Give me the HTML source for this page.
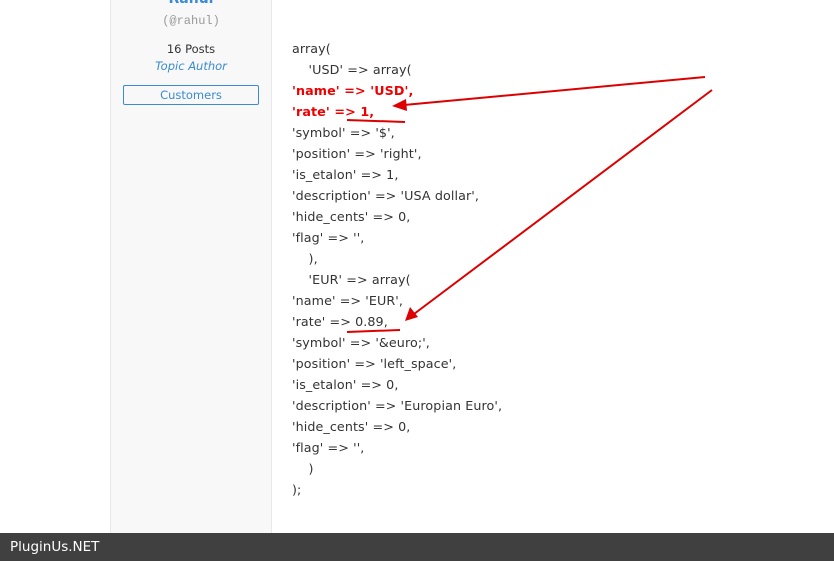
<!DOCTYPE html>
<html><head><style>
body{margin:0;width:834px;height:561px;overflow:hidden;background:#fff;position:relative;font-family:"DejaVu Sans",Verdana,sans-serif;}
.side{position:absolute;left:110px;top:0;width:160px;height:533px;background:#f8f8f8;border-left:1px solid #e8e8e8;border-right:1px solid #e8e8e8;text-align:center;}
.name{position:absolute;left:0;right:0;top:-9px;color:#3a8ad4;font-weight:bold;font-size:14px;}
.handle{position:absolute;left:0;right:0;top:14px;color:#999;font-family:"Liberation Mono",monospace;font-size:12px;}
.posts{position:absolute;left:0;right:0;top:42px;font-size:11.5px;color:#333;}
.auth{position:absolute;left:0;right:0;top:59px;font-size:11.5px;color:#3a8ad4;font-style:italic;}
.btn{position:absolute;left:12px;top:85px;width:134px;height:18px;border:1px solid #3a8ad4;border-radius:2px;font-size:11.5px;color:#3a8ad4;line-height:18px;}
.code{position:absolute;left:292px;top:38px;font-size:12.7px;letter-spacing:0.1px;line-height:21px;color:#333;white-space:pre;}
.r{color:#e00;font-weight:bold;}
.foot{position:absolute;left:0;top:533px;width:834px;height:28px;background:#404040;color:#fff;font-size:13.5px;line-height:28px;padding-left:10px;box-sizing:border-box;}
svg{position:absolute;left:0;top:0;}
</style></head><body>
<div class="side">
<div class="name">Rahul</div>
<div class="handle">(@rahul)</div>
<div class="posts">16 Posts</div>
<div class="auth">Topic Author</div>
<div class="btn">Customers</div>
</div>
<div class="code">array(
    'USD' =&gt; array(
<span class="r">'name' =&gt; 'USD',</span>
<span class="r">'rate' =&gt; 1,</span>
'symbol' =&gt; '$',
'position' =&gt; 'right',
'is_etalon' =&gt; 1,
'description' =&gt; 'USA dollar',
'hide_cents' =&gt; 0,
'flag' =&gt; '',
    ),
    'EUR' =&gt; array(
'name' =&gt; 'EUR',
'rate' =&gt; 0.89,
'symbol' =&gt; '&amp;euro;',
'position' =&gt; 'left_space',
'is_etalon' =&gt; 0,
'description' =&gt; 'Europian Euro',
'hide_cents' =&gt; 0,
'flag' =&gt; '',
    )
);</div>
<svg width="834" height="561">
<g stroke="#d00" stroke-width="2" fill="none">
<line x1="705" y1="77" x2="404" y2="105"/>
<line x1="712" y1="90" x2="414" y2="314"/>
<line x1="347" y1="120" x2="405" y2="122"/>
<line x1="347" y1="332" x2="400" y2="330"/>
</g>
<polygon points="392,106 406,99 407,111" fill="#d00"/>
<polygon points="405,321 410,307 418,317" fill="#d00"/>
</svg>
<div class="foot">PluginUs.NET</div>
</body></html>
